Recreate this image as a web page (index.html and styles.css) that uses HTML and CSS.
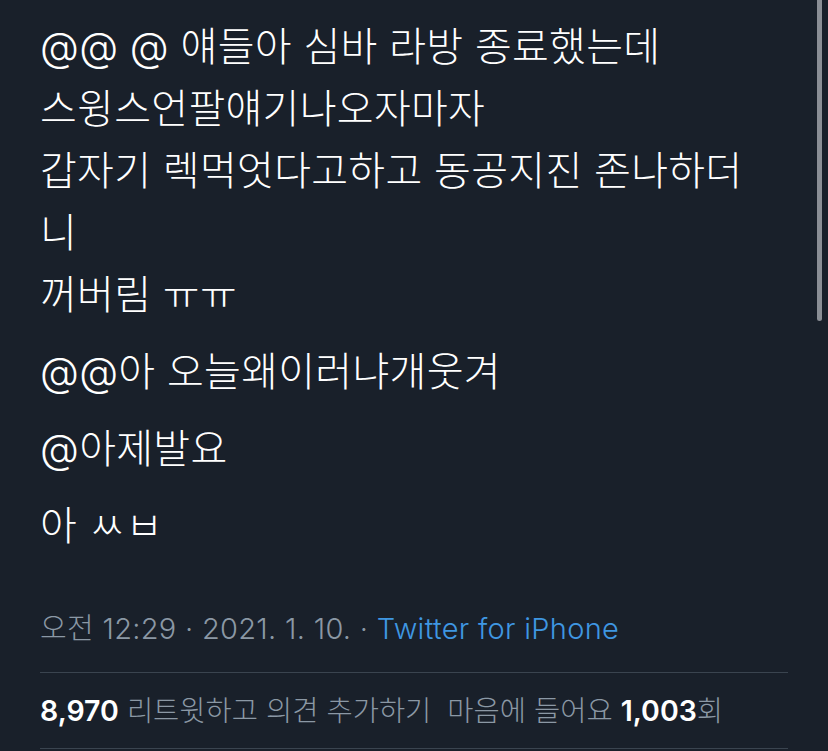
FILE: index.html
```html
<!DOCTYPE html>
<html lang="ko">
<head>
    <meta charset="UTF-8">
    <meta name="viewport" content="width=device-width, initial-scale=1.0">
    <title>Tweet</title>
    <link rel="stylesheet" href="styles.css">
</head>
<body>
    <div class="scrollbar"></div>
    <div class="tweet">
        <div class="tweet-text">
            <p>@@ @ 얘들아 심바 라방 종료했는데<br>스윙스언팔얘기나오자마자<br>갑자기 렉먹엇다고하고 동공지진 존나하더니<br>꺼버림 ㅠㅠ</p>
            <p>@@아 오늘왜이러냐개웃겨</p>
            <p>@아제발요</p>
            <p>아 ㅆㅂ</p>
        </div>

        <div class="meta">오전 12:29 · 2021. 1. 10. · <span class="source">Twitter for iPhone</span></div>

        <div class="stats">
            <span class="num">8,970</span> 리트윗하고 의견 추가하기&nbsp;&nbsp;마음에 들어요 <span class="num">1,003</span>회
        </div>
    </div>
</body>
</html>
```

FILE: styles.css
```css
body {
    margin: 0;
    background: #19202a;
    color: #fff;
    font-family: Inter, "Noto Sans CJK KR", sans-serif;
    height: 751px;
    overflow: hidden;
    position: relative;
}

.scrollbar {
    position: absolute;
    top: 0;
    right: 6px;
    width: 5px;
    height: 321px;
    background: #8a8e95;
    border-radius: 0 0 3px 3px;
}

.tweet {
    padding: 16px 40px 0 40px;
}

.tweet-text {
    width: 725px;
}

.tweet-text p {
    margin: 0 0 15px 0;
    font-size: 40px;
    font-weight: 300;
    line-height: 62px;
    letter-spacing: 0.3px;
}

.meta {
    margin-top: 48px;
    font-size: 29px;
    font-weight: 300;
    letter-spacing: 0.3px;
    color: #8b98a5;
    padding-bottom: 25px;
    border-bottom: 1px solid #3a444f;
}

.source {
    color: #3f97e2;
}

.stats {
    padding-top: 15px;
    font-size: 28.5px;
    font-weight: 300;
    color: #8b98a5;
    padding-bottom: 19px;
    border-bottom: 1px solid #3a444f;
}

.num {
    color: #fff;
    font-weight: 600;
}
```
